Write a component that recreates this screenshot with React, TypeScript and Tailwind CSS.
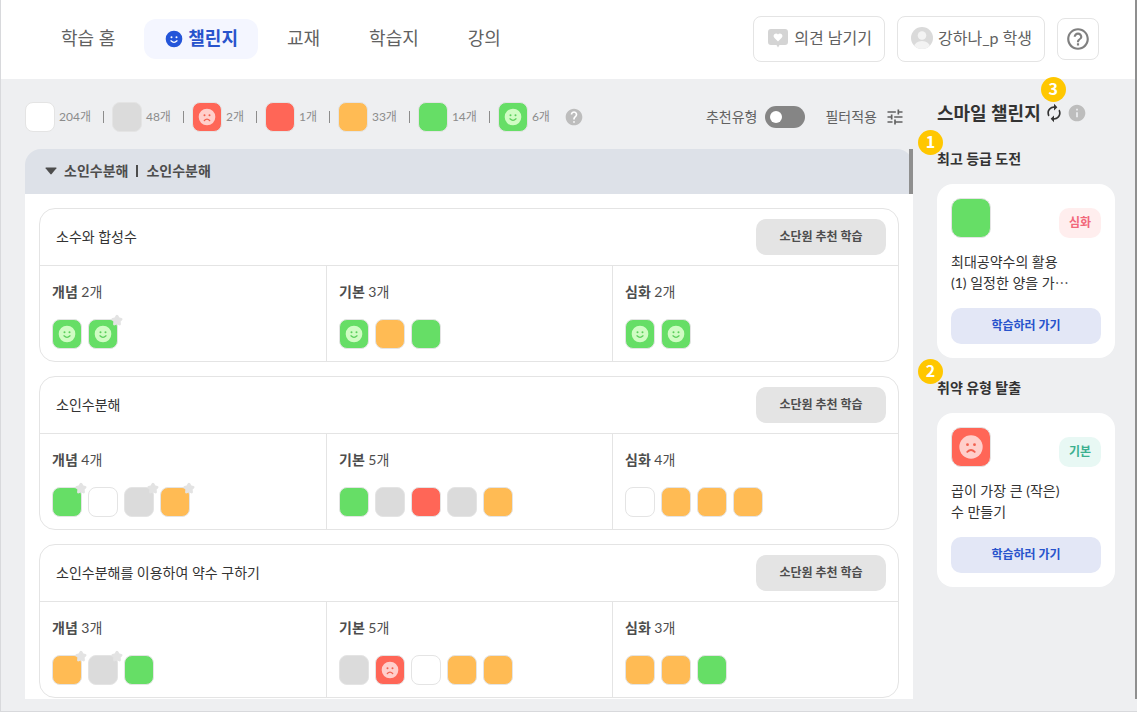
import { useState } from "react";

type Level = "empty" | "gray" | "red" | "sad" | "orange" | "green" | "smile";

interface Mark {
  level: Level;
  starred?: boolean;
}

interface Unit {
  title: string;
  groups: { name: string; marks: Mark[] }[];
}

const TILE_COLORS: Record<Level, string> = {
  empty: "bg-white",
  gray: "bg-[#dbdbdb]",
  red: "bg-[#ff6657]",
  sad: "bg-[#ff6657]",
  orange: "bg-[#ffbb54]",
  green: "bg-[#66de66]",
  smile: "bg-[#66de66]",
};

const LEGEND: { level: Level; count: number }[] = [
  { level: "empty", count: 204 },
  { level: "gray", count: 48 },
  { level: "sad", count: 2 },
  { level: "red", count: 1 },
  { level: "orange", count: 33 },
  { level: "green", count: 14 },
  { level: "smile", count: 6 },
];

const UNITS: Unit[] = [
  {
    title: "소수와 합성수",
    groups: [
      { name: "개념", marks: [{ level: "smile" }, { level: "smile", starred: true }] },
      { name: "기본", marks: [{ level: "smile" }, { level: "orange" }, { level: "green" }] },
      { name: "심화", marks: [{ level: "smile" }, { level: "smile" }] },
    ],
  },
  {
    title: "소인수분해",
    groups: [
      {
        name: "개념",
        marks: [
          { level: "green", starred: true },
          { level: "empty" },
          { level: "gray", starred: true },
          { level: "orange", starred: true },
        ],
      },
      {
        name: "기본",
        marks: [
          { level: "green" },
          { level: "gray" },
          { level: "red" },
          { level: "gray" },
          { level: "orange" },
        ],
      },
      {
        name: "심화",
        marks: [{ level: "empty" }, { level: "orange" }, { level: "orange" }, { level: "orange" }],
      },
    ],
  },
  {
    title: "소인수분해를 이용하여 약수 구하기",
    groups: [
      {
        name: "개념",
        marks: [
          { level: "orange", starred: true },
          { level: "gray", starred: true },
          { level: "green" },
        ],
      },
      {
        name: "기본",
        marks: [
          { level: "gray" },
          { level: "sad" },
          { level: "empty" },
          { level: "orange" },
          { level: "orange" },
        ],
      },
      { name: "심화", marks: [{ level: "orange" }, { level: "orange" }, { level: "green" }] },
    ],
  },
];

function Face({ sad, className }: { sad?: boolean; className: string }) {
  return (
    <svg viewBox="0 0 24 24" className={className} aria-hidden="true">
      <circle cx="12" cy="12" r="10" fill="currentColor" />
      <g className="fill-(--ink) stroke-(--ink)">
        <circle cx="9" cy="10" r="1.2" stroke="none" />
        <circle cx="15" cy="10" r="1.2" stroke="none" />
        <path
          d={sad ? "M8.8 16.2Q12 13 15.2 16.2" : "M8.4 14.2Q12 18 15.6 14.2"}
          fill="none"
          strokeWidth="1.6"
          strokeLinecap="round"
        />
      </g>
    </svg>
  );
}

function Tile({ level, starred, large }: Mark & { large?: boolean }) {
  const size = large ? "size-10 rounded-[10px]" : "size-[30px] rounded-lg";
  const face = large ? "size-7" : "size-5";
  return (
    <span
      className={`relative grid shrink-0 place-items-center border border-[#e4e4e4] ${size} ${TILE_COLORS[level]}`}
    >
      {level === "smile" && <Face className={`text-[#d0fcc4] [--ink:#5bcf5b] ${face}`} />}
      {level === "sad" && <Face sad className={`text-[#ffcfcb] [--ink:#f2604f] ${face}`} />}
      {starred && (
        <svg
          viewBox="0 0 24 24"
          className="absolute -top-[6px] -right-[6px] size-3 text-[#e3e3e3]"
          fill="currentColor"
          stroke="currentColor"
          strokeWidth="5"
          strokeLinejoin="round"
          aria-hidden="true"
        >
          <path d="M12 4l2.900 5 5.600 1.200-3.800 4.300.6 5.800L12 18l-5.300 2.300.6-5.800-3.800-4.300L9.100 9z" />
        </svg>
      )}
    </span>
  );
}

function Badge({ label, className }: { label: string; className: string }) {
  return (
    <span
      className={`absolute z-10 grid size-[25px] place-items-center rounded-full bg-[#ffc700] pb-[3px] font-['Noto_Sans_CJK_KR',sans-serif] text-base leading-none font-bold text-white ${className}`}
    >
      {label}
    </span>
  );
}

function Header() {
  return (
    <header className="flex h-[79px] shrink-0 items-center justify-between bg-white pr-9 pb-px pl-10">
      <nav className="flex gap-[9px] text-lg whitespace-nowrap text-[#616161]">
        <a href="#home" className="flex h-10 items-center px-5 pb-0.5">학습 홈</a>
        <a
          href="#challenge"
          aria-current="page"
          className="flex h-10 items-center gap-1 rounded-xl bg-[#f4f6ff] px-5 pb-0.5 font-bold text-[#2853cc]"
        >
          <Face className="mt-0.5 size-5 text-[#2455d9] [--ink:#ffffff]" />
          챌린지
        </a>
        <a href="#books" className="flex h-10 items-center px-5 pb-0.5">교재</a>
        <a href="#sheets" className="flex h-10 items-center px-5 pb-0.5">학습지</a>
        <a href="#lectures" className="flex h-10 items-center px-5 pb-0.5">강의</a>
      </nav>

      <div className="flex items-center gap-3 text-base whitespace-nowrap text-[#616161]">
        <button
          type="button"
          className="flex h-[46px] items-center gap-1 rounded-lg border border-[#e4e4e4] px-3 pb-0.5"
        >
          <svg viewBox="0 0 24 24" className="size-6" aria-hidden="true">
            <path
              fill="#d4d4d4"
              d="M5 3h14a3 3 0 0 1 3 3v10a3 3 0 0 1-3 3h-5.500L12 21.500l-1.500-2.500H5a3 3 0 0 1-3-3V6a3 3 0 0 1 3-3z"
            />
            <path
              fill="#fff"
              d="M12 15.400l-3.700-3.600a2.500 2.500 0 0 1 0-3.500 2.500 2.500 0 0 1 3.700.2 2.500 2.500 0 0 1 3.700-.2 2.500 2.500 0 0 1 0 3.500z"
            />
          </svg>
          의견 남기기
        </button>
        <button
          type="button"
          className="flex h-[46px] items-center gap-1 rounded-lg border border-[#e4e4e4] px-3 pb-0.5"
        >
          <svg viewBox="0 0 24 24" className="size-6" aria-hidden="true">
            <clipPath id="avatar">
              <circle cx="12" cy="12" r="11" />
            </clipPath>
            <g clipPath="url(#avatar)">
              <rect width="24" height="24" fill="#dadada" />
              <circle cx="12" cy="9.500" r="4.300" fill="#f3f3f3" />
              <ellipse cx="12" cy="21" rx="8" ry="6" fill="#f3f3f3" />
            </g>
          </svg>
          강하나_p 학생
        </button>
        <button
          type="button"
          aria-label="도움말"
          className="grid size-[42px] place-items-center rounded-lg border border-[#e4e4e4]"
        >
          <svg viewBox="0 0 24 24" className="size-[26px] fill-[#808080]" aria-hidden="true">
            <path d="M11 18h2v-2h-2v2zm1-16C6.480 2 2 6.480 2 12s4.480 10 10 10 10-4.480 10-10S17.520 2 12 2zm0 18c-4.410 0-8-3.590-8-8s3.590-8 8-8 8 3.590 8 8-3.590 8-8 8zm0-14c-2.210 0-4 1.790-4 4h2c0-1.100.9-2 2-2s2 .9 2 2c0 2-3 1.750-3 5h2c0-2.250 3-2.500 3-5 0-2.210-1.790-4-4-4z" />
          </svg>
        </button>
      </div>
    </header>
  );
}

function Toolbar() {
  const [recommended, setRecommended] = useState(false);

  return (
    <div className="flex h-[30px] items-center justify-between whitespace-nowrap">
      <div className="flex items-center text-xs text-[#8c8c8c]">
        {LEGEND.map(({ level, count }, i) => (
          <div key={level} className="flex items-center">
            {i > 0 && <span className="mr-2 ml-3 h-3 w-px bg-[#8c8c8c]" />}
            <Tile level={level} />
            <span className="ml-1">{count}개</span>
          </div>
        ))}
        <button type="button" aria-label="등급 안내" className="ml-[14px]">
          <svg viewBox="0 0 24 24" className="size-5 fill-[#bdbdbd]" aria-hidden="true">
            <circle cx="12" cy="12" r="7" fill="#fff" />
            <path d="M12 2C6.480 2 2 6.480 2 12s4.480 10 10 10 10-4.480 10-10S17.520 2 12 2zm1 17h-2v-2h2v2zm2.070-7.750l-.9.920C13.450 12.900 13 13.500 13 15h-2v-.5c0-1.100.450-2.100 1.170-2.830l1.240-1.260c.370-.360.590-.860.590-1.410 0-1.100-.9-2-2-2s-2 .9-2 2H8c0-2.210 1.790-4 4-4s4 1.790 4 4c0 .880-.360 1.680-.930 2.250z" />
          </svg>
        </button>
      </div>

      <div className="flex items-center gap-5 pr-2 text-sm text-[#616161]">
        <label className="flex items-center gap-2">
          추천유형
          <input
            type="checkbox"
            role="switch"
            checked={recommended}
            onChange={(e) => setRecommended(e.target.checked)}
            className="peer sr-only"
          />
          <span className="flex h-[22px] w-10 items-center rounded-full bg-[#858585] px-[5px] peer-checked:justify-end peer-checked:bg-[#2455d9]">
            <span className="size-3 rounded-full bg-white" />
          </span>
        </label>
        <button type="button" className="flex items-center gap-2">
          필터적용
          <svg viewBox="0 0 24 24" className="size-5 fill-[#616161]" aria-hidden="true">
            <path d="M3 17v2h6v-2H3zM3 5v2h10V5H3zm10 16v-2h8v-2h-8v-2h-2v6h2zM7 9v2H3v2h4v2h2V9H7zm14 4v-2H11v2h10zm-6-4h2V7h4V5h-4V3h-2v6z" />
          </svg>
        </button>
      </div>
    </div>
  );
}

function UnitCard({ unit }: { unit: Unit }) {
  return (
    <article className="rounded-2xl border border-[#e4e4e4]">
      <div className="flex h-[57px] items-center justify-between border-b border-[#e4e4e4] pr-3 pl-4">
        <h3 className="text-sm text-[#333333]">{unit.title}</h3>
        <button
          type="button"
          className="h-9 w-[130px] rounded-[10px] bg-[#e4e4e4] text-xs font-bold text-[#4d4d4d]"
        >
          소단원 추천 학습
        </button>
      </div>
      <div className="grid grid-cols-3">
        {unit.groups.map((group) => (
          <div key={group.name} className="border-[#e4e4e4] px-3 pt-[15px] pb-3 not-first:border-l">
            <p className="mb-[17px] text-sm leading-[21px] text-[#4d4d4d]">
              <strong>{group.name}</strong> {group.marks.length}개
            </p>
            <div className="flex gap-[6px]">
              {group.marks.map((mark, i) => (
                <Tile key={i} {...mark} />
              ))}
            </div>
          </div>
        ))}
      </div>
    </article>
  );
}

function UnitList() {
  const [open, setOpen] = useState(true);

  return (
    <div className="relative mt-[17px] flex min-h-0 flex-1 flex-col">
      <button
        type="button"
        aria-expanded={open}
        onClick={() => setOpen(!open)}
        className="flex h-[45px] shrink-0 items-center rounded-t-2xl bg-[#dde1e8] pb-0.5 pl-5 text-sm font-bold text-[#4d4d4d]"
      >
        <svg viewBox="0 0 12 8" className="mr-[7px] h-2 w-3 fill-[#4d4d4d]" aria-hidden="true">
          <path d="M1 .5h10q.8 0 .4.7L6.700 7q-.7.8-1.400 0L.6 1.200Q.2.500 1 .5z" />
        </svg>
        소인수분해
        <span className="mx-2 h-3 w-[2px] bg-[#4d4d4d]" />
        소인수분해
      </button>
      <div className="min-h-0 flex-1 overflow-hidden bg-white p-[14px]">
        <div className={open ? "flex flex-col gap-[14px]" : "hidden"}>
          {UNITS.map((unit) => (
            <UnitCard key={unit.title} unit={unit} />
          ))}
        </div>
      </div>
      {/* scroll thumb */}
      <span className="absolute top-0 right-0 h-[45px] w-1 bg-[#8f8f8f]" />
    </div>
  );
}

interface ChallengeProps {
  badge: string;
  heading: string;
  level: Level;
  tag: string;
  tagClass: string;
  lines: [string, string];
}

function Challenge({ badge, heading, level, tag, tagClass, lines }: ChallengeProps) {
  return (
    <section className="relative">
      <Badge label={badge} className="-top-[19px] -left-[19px]" />
      <h3 className="mb-4 text-sm leading-[19px] font-bold text-[#333333]">{heading}</h3>
      <div className="rounded-2xl bg-white p-[14px]">
        <div className="flex items-end justify-between">
          <Tile level={level} large />
          <span
            className={`grid h-[30px] w-[42px] place-items-center rounded-[10px] text-xs font-bold ${tagClass}`}
          >
            {tag}
          </span>
        </div>
        <p className="mt-[13px] mb-[15px] text-sm leading-[21px] text-[#333333]">
          {lines[0]}
          <br />
          {lines[1]}
        </p>
        <button
          type="button"
          className="h-9 w-full rounded-[10px] bg-[#e3e7f6] text-xs font-bold text-[#2853cc]"
        >
          학습하러 가기
        </button>
      </div>
    </section>
  );
}

function Sidebar() {
  return (
    <aside className="w-[178px] shrink-0 whitespace-nowrap">
      <div className="mb-[22px] flex h-7 items-center gap-[3px]">
        <h2 className="text-lg font-bold text-[#333333]">스마일 챌린지</h2>
        <button type="button" aria-label="새로고침" className="relative">
          <Badge label="3" className="-top-[26px] -left-[3px]" />
          <svg viewBox="0 0 24 24" className="size-5 fill-[#333333]" aria-hidden="true">
            <path d="M12 6v3l4-4-4-4v3c-4.420 0-8 3.580-8 8 0 1.570.460 3.030 1.240 4.260L6.700 14.800A5.870 5.870 0 0 1 6 12c0-3.310 2.690-6 6-6zm6.760 1.740L17.300 9.200c.440.840.7 1.790.7 2.800 0 3.310-2.690 6-6 6v-3l-4 4 4 4v-3c4.420 0 8-3.580 8-8 0-1.570-.460-3.030-1.240-4.260z" />
          </svg>
        </button>
        <button type="button" aria-label="스마일 챌린지 안내">
          <svg viewBox="0 0 24 24" className="size-5 fill-[#bdbdbd]" aria-hidden="true">
            <path d="M12 2C6.480 2 2 6.480 2 12s4.480 10 10 10 10-4.480 10-10S17.520 2 12 2zm1 15h-2v-6h2v6zm0-8h-2V7h2v2z" />
          </svg>
        </button>
      </div>
      <div className="flex flex-col gap-5">
        <Challenge
          badge="1"
          heading="최고 등급 도전"
          level="green"
          tag="심화"
          tagClass="bg-[#ffeeee] text-[#f2677a]"
          lines={["최대공약수의 활용", "(1) 일정한 양을 가⋯"]}
        />
        <Challenge
          badge="2"
          heading="취약 유형 탈출"
          level="sad"
          tag="기본"
          tagClass="bg-[#e8f8f4] text-[#3bb08f]"
          lines={["곱이 가장 큰 (작은)", "수 만들기"]}
        />
      </div>
    </aside>
  );
}

export default function App() {
  return (
    <div
      lang="ko"
      className="flex h-screen border-b border-l border-[#d8d9dc] bg-[#eeeff1] font-['Lato','Noto_Sans_CJK_KR',sans-serif]"
    >
      <div className="flex min-w-0 flex-1 flex-col">
        <Header />
        <div className="flex min-h-0 flex-1 gap-6 pt-5 pr-5 pb-3 pl-6">
          <main className="flex min-w-0 flex-1 flex-col pt-[3px]">
            <Toolbar />
            <UnitList />
          </main>
          <Sidebar />
        </div>
      </div>
      {/* page scroll thumb */}
      <div className="mb-3 w-[2px] shrink-0 bg-[#8f8f8f]" />
    </div>
  );
}
